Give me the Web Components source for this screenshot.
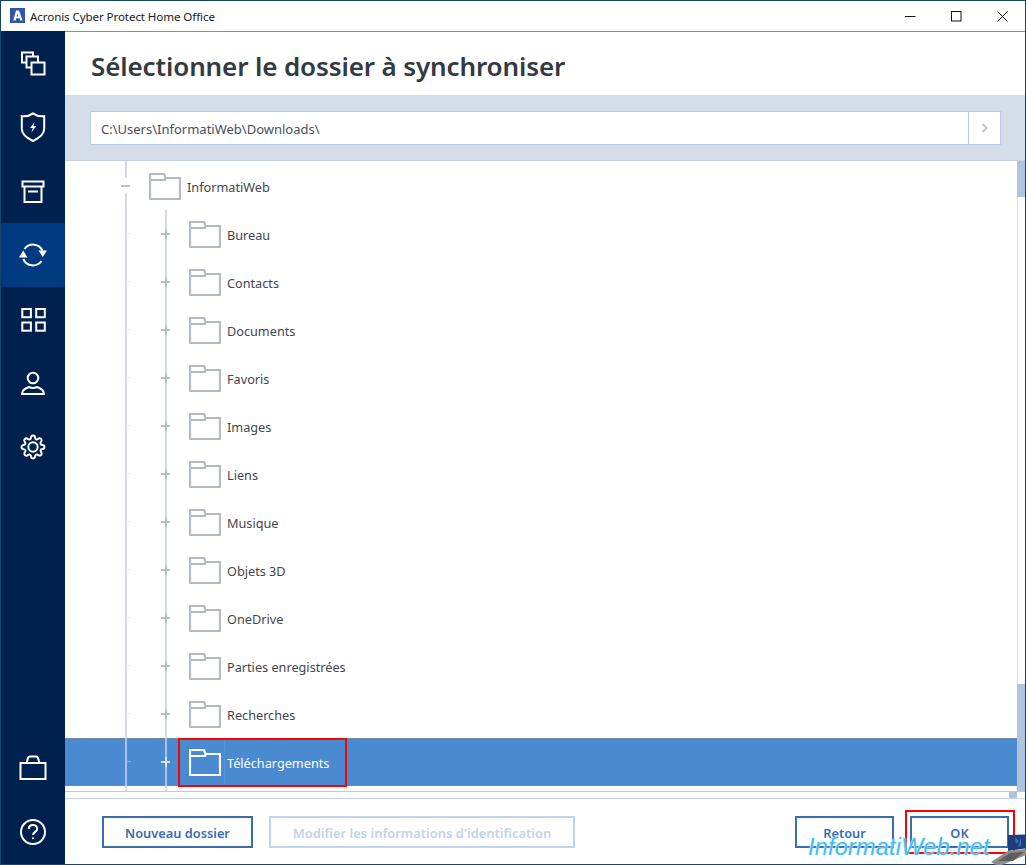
<!DOCTYPE html>
<html lang="fr">
<head>
<meta charset="utf-8">
<title>Acronis Cyber Protect Home Office</title>
<style>
  html, body { margin: 0; padding: 0; background: #fff; }
  body { font-family: "Noto Sans", "Open Sans", sans-serif; }
</style>
</head>
<body>
<app-window>
  <title-bar slot="title">Acronis Cyber Protect Home Office</title-bar>
  <side-nav slot="nav"></side-nav>
  <page-header slot="main">Sélectionner le dossier à synchroniser</page-header>
  <path-bar slot="main" value="C:\Users\InformatiWeb\Downloads\"></path-bar>
  <folder-tree slot="main">
    <tree-row level="0">InformatiWeb</tree-row>
    <tree-row>Bureau</tree-row>
    <tree-row>Contacts</tree-row>
    <tree-row>Documents</tree-row>
    <tree-row>Favoris</tree-row>
    <tree-row>Images</tree-row>
    <tree-row>Liens</tree-row>
    <tree-row>Musique</tree-row>
    <tree-row>Objets 3D</tree-row>
    <tree-row>OneDrive</tree-row>
    <tree-row>Parties enregistrées</tree-row>
    <tree-row>Recherches</tree-row>
    <tree-row selected>Téléchargements</tree-row>
  </folder-tree>
  <footer-bar slot="main">
    <action-button style="width:151px">Nouveau dossier</action-button>
    <action-button disabled style="width:306px;font-size:12.950px">Modifier les informations d'identification</action-button>
    <action-button slot="end" style="width:99px">Retour</action-button>
    <action-button slot="end" style="width:99px">OK</action-button>
  </footer-bar>
</app-window>
<red-mark style="left:178px;top:738px;width:169px;height:49px"></red-mark>
<red-mark style="left:905px;top:810px;width:110px;height:44px"></red-mark>
<site-mark></site-mark>

<script>
const GEAR = 'M19.4 15a1.65 1.65 0 0 0 .33 1.82l.06.06a2 2 0 0 1 0 2.83 2 2 0 0 1-2.83 0l-.06-.06a1.65 1.65 0 0 0-1.82-.33 1.65 1.65 0 0 0-1 1.51V21a2 2 0 0 1-2 2 2 2 0 0 1-2-2v-.09A1.65 1.65 0 0 0 9 19.4a1.65 1.65 0 0 0-1.82.33l-.06.06a2 2 0 0 1-2.83 0 2 2 0 0 1 0-2.83l.06-.06a1.65 1.65 0 0 0 .33-1.82 1.65 1.65 0 0 0-1.51-1H3a2 2 0 0 1-2-2 2 2 0 0 1 2-2h.09A1.65 1.65 0 0 0 4.6 9a1.65 1.65 0 0 0-.33-1.82l-.06-.06a2 2 0 0 1 0-2.83 2 2 0 0 1 2.83 0l.06.06a1.65 1.65 0 0 0 1.82.33H9a1.65 1.65 0 0 0 1-1.51V3a2 2 0 0 1 2-2 2 2 0 0 1 2 2v.09a1.65 1.65 0 0 0 1 1.51 1.65 1.65 0 0 0 1.82-.33l.06-.06a2 2 0 0 1 2.83 0 2 2 0 0 1 0 2.83l-.06.06a1.65 1.65 0 0 0-.33 1.82V9a1.65 1.65 0 0 0 1.51 1H21a2 2 0 0 1 2 2 2 2 0 0 1-2 2h-.09a1.65 1.65 0 0 0-1.51 1z';

// all nav icons are drawn in a 32x32 box, white stroke
const ICONS = {
  copies: '<path d="M9 15.500H5V5.500h11v4"/><path d="M14 20.500H9.500V9.500H21v6"/><rect x="14.500" y="15.500" width="13" height="12"/>',
  shield: '<path d="M4.800 5.200C8.500 5.600 13 4.600 16 2.400c3 2.200 7.500 3.200 11.200 2.800V18c0 5.500-5.700 9.300-11.200 12C10.500 27.300 4.800 23.500 4.800 18z"/><path d="M17.600 11l-4.600 6h2.800l-1.400 4.500 4.800-6.200h-2.800z" fill="#fff" stroke="none"/>',
  archive: '<rect x="5.500" y="6.500" width="21" height="5"/><path d="M7.500 11.500v15.500h17V11.500"/><path d="M11 16.500h10"/>',
  sync: '<path d="M7.500 10A10.500 10.500 0 0 1 25.700 12"/><path d="M24.500 22A10.500 10.500 0 0 1 6.300 20"/><path d="M21.500 11.500h8.500l-4.250 6.500z" fill="#fff" stroke="none"/><path d="M2 18.500h8.500l-4.250-7z" fill="#fff" stroke="none"/>',
  grid: '<rect x="5.300" y="6" width="8.600" height="8.200"/><rect x="19.200" y="6" width="8.600" height="8.200"/><rect x="5.300" y="19.500" width="8.600" height="8.200"/><rect x="19.200" y="19.500" width="8.600" height="8.200"/>',
  account: '<circle cx="16" cy="11" r="5.300"/><path d="M5 27c0-3.500 4-6 7-7 2.500 1.300 5.500 1.300 8 0 3 1 7 3.500 7 7z"/>',
  bag: '<rect x="3.500" y="11" width="25" height="16"/><path d="M9.500 11l1.500-5c.3-1 1-1.500 2-1.500h6c1 0 1.700.5 2 1.500l1.500 5"/>',
  help: '<circle cx="16" cy="16" r="12"/><path d="M11.800 13c0-2.500 1.900-4 4.200-4s4.200 1.500 4.200 3.700c0 3.300-4.200 3-4.200 6.300"/><circle cx="16" cy="22.300" r="1" fill="#fff" stroke="none"/>'
};

class AppWindow extends HTMLElement {
  constructor() {
    super();
    this.attachShadow({ mode: 'open' });
    this.shadowRoot.innerHTML = `
      <style>
        :host {
          display: grid; box-sizing: border-box; width: 1026px; height: 865px;
          grid-template-columns: 64px 1fr; grid-template-rows: 30px 1fr;
          border: 1px solid #17456a; background: #fff;
        }
        .top { grid-column: 1 / 3; display: flex; }
        .main { display: flex; flex-direction: column; min-width: 0; min-height: 0; }
      </style>
      <div class="top"><slot name="title"></slot></div>
      <slot name="nav"></slot>
      <div class="main"><slot name="main"></slot></div>
    `;
  }
}

class TitleBar extends HTMLElement {
  constructor() {
    super();
    this.attachShadow({ mode: 'open' });
    this.shadowRoot.innerHTML = `
      <style>
        :host {
          display: flex; flex: 1; align-items: center; box-sizing: border-box; height: 30px;
          background: #fff;
          font: 11.600px "Noto Sans", sans-serif; letter-spacing: -.1px; color: #1a1a1a;
        }
        .logo { margin: -1px 5px 0 9px; width: 15px; height: 15px; flex: none; }
        .text { flex: 1; white-space: nowrap; }
        .ctl { width: 46px; height: 30px; display: flex; align-items: center; justify-content: center; }
        .ctl.min { width: 45px; }
        svg { display: block; }
      </style>
      <svg class="logo" viewBox="0 0 15 15">
        <rect width="15" height="15" fill="#2f56ab"/>
        <path d="M6 2.500h3l3.600 10h-2.300l-.7-2.200H6.300l-.7 2.200H3.300zM7.500 5L6.800 8.400h1.500z" fill="#fff" fill-rule="evenodd"/>
      </svg>
      <span class="text"><slot></slot></span>
      <span class="ctl min"><svg width="11" height="11"><path d="M0 5.500h10.500" stroke="#111" stroke-width="1"/></svg></span>
      <span class="ctl"><svg width="11" height="11"><rect x=".5" y=".5" width="9.500" height="9.500" fill="none" stroke="#111"/></svg></span>
      <span class="ctl"><svg width="11" height="11"><path d="M.5.500l10 10M10.500.500l-10 10" stroke="#111" fill="none"/></svg></span>
    `;
  }
}

class NavItem extends HTMLElement {
  constructor() {
    super();
    this.attachShadow({ mode: 'open' });
  }
  connectedCallback() {
    const name = this.getAttribute('icon');
    const body = name === 'gear'
      ? `<g transform="translate(3.500 3.500) scale(1.040)"><path d="${GEAR}" stroke-width="1.900"/><circle cx="12" cy="12" r="4.500" stroke-width="1.900"/></g>`
      : ICONS[name];
    this.shadowRoot.innerHTML = `
      <style>
        :host { display: flex; align-items: center; justify-content: center; height: 64px; flex: none; }
        :host([active]) { background: #003a80; }
        svg { display: block; fill: none; stroke: #fff; stroke-width: 2; }
      </style>
      <svg width="32" height="32" viewBox="0 0 32 32">${body}</svg>
    `;
  }
}

class SideNav extends HTMLElement {
  constructor() {
    super();
    this.attachShadow({ mode: 'open' });
    this.shadowRoot.innerHTML = `
      <style>
        :host { display: flex; flex-direction: column; background: #00204e; }
        .gap { flex: 1; }
      </style>
      <nav-item icon="copies"></nav-item>
      <nav-item icon="shield"></nav-item>
      <nav-item icon="archive"></nav-item>
      <nav-item icon="sync" active></nav-item>
      <nav-item icon="grid"></nav-item>
      <nav-item icon="account"></nav-item>
      <nav-item icon="gear"></nav-item>
      <div class="gap"></div>
      <nav-item icon="bag"></nav-item>
      <nav-item icon="help"></nav-item>
    `;
  }
}

class PageHeader extends HTMLElement {
  constructor() {
    super();
    this.attachShadow({ mode: 'open' });
    this.shadowRoot.innerHTML = `
      <style>
        :host {
          display: flex; align-items: center; flex: none; box-sizing: border-box; height: 64px;
          padding: 4px 0 0 26px; border-top: 1px solid #8e8e8e;
          font: 600 26px "Noto Sans", sans-serif; letter-spacing: -.12px; color: #333a42; white-space: nowrap;
        }
      </style>
      <slot></slot>
    `;
  }
}

class PathBar extends HTMLElement {
  constructor() {
    super();
    this.attachShadow({ mode: 'open' });
  }
  connectedCallback() {
    this.shadowRoot.innerHTML = `
      <style>
        :host {
          display: flex; flex: none; box-sizing: border-box; height: 66px; padding: 16px 24px 16px 25px;
          background: #d5dde9; border-bottom: 1px solid #c6d1e0;
        }
        .box {
          flex: 1; display: flex; box-sizing: border-box; height: 34px;
          background: #fff; border: 1px solid #b9c9e0;
        }
        .val {
          flex: 1; display: flex; align-items: center; padding: 1px 0 0 10px;
          font: 13px "Noto Sans", sans-serif; color: #4a505a;
        }
        .go {
          width: 31px; display: flex; align-items: center; justify-content: center;
          border-left: 1px solid #b9c9e0;
        }
      </style>
      <div class="box">
        <div class="val">${this.getAttribute('value')}</div>
        <div class="go">
          <svg width="8" height="10"><path d="M1.500 1l4 4-4 4" fill="none" stroke="#bcc9da" stroke-width="2.200"/></svg>
        </div>
      </div>
    `;
  }
}

class FolderTree extends HTMLElement {
  constructor() {
    super();
    this.attachShadow({ mode: 'open' });
    this.shadowRoot.innerHTML = `
      <style>
        :host { display: flex; flex-direction: column; flex: 1; min-height: 0; }
        .body { flex: 1; display: flex; min-height: 0; }
        .rows { flex: 1; display: flex; flex-direction: column; min-width: 0; }
        .cap { flex: none; display: flex; padding-left: 41px; }
        .cap i { width: 40px; background: linear-gradient(#d5dbe3, #d5dbe3) 19px 0 / 2px 100% no-repeat; }
        .v { flex: none; width: 8px; display: flex; flex-direction: column; background: #fff; }
        .v b { display: block; background: #b0c4de; }
        .v .t { height: 36px; }
        .v .s { flex: 1; background: #fff; box-shadow: inset 1px 0 #d5dde9; }
        .v .e { height: 107px; }
        .h { flex: none; height: 8px; display: flex; box-sizing: border-box; border-top: 1px solid #b9c9e0; border-bottom: 1px solid #c9d5e6; }
        .h .track { flex: 1; }
        .h .corner { width: 8px; background: #b0c4de; }
        .h .pad { width: 8px; background: #fff; }
      </style>
      <div class="body">
        <div class="rows">
          <div class="cap" style="height:1px"><i></i></div>
          <slot></slot>
          <div class="cap" style="height:5px"><i></i><i></i></div>
          <div style="flex:1"></div>
        </div>
        <div class="v"><b class="t"></b><b class="s"></b><b class="e"></b></div>
      </div>
      <div class="h"><div class="track"></div><div class="corner"></div><div class="pad"></div></div>
    `;
  }
}

class TreeRow extends HTMLElement {
  constructor() {
    super();
    this.attachShadow({ mode: 'open' });
  }
  connectedCallback() {
    const top = this.getAttribute('level') === '0';
    const cols = top
      ? '<span class="g minus"></span>'
      : '<span class="g tick"></span><span class="g plus"></span>';
    this.shadowRoot.innerHTML = `
      <style>
        :host {
          --line: #d5dbe3; --mark: #b9c0c8; --tick: #e4e7eb; --folder: #b4bbc4;
          display: flex; flex: none; box-sizing: border-box; height: 48px; padding-left: 41px;
          font: 12.700px "Noto Sans", sans-serif; color: #3f4650;
        }
        :host([selected]) {
          --line: #a9c3e6; --mark: #d5e2f3; --tick: #8fb2e0; --folder: #fff;
          background: #4a8ad1; color: #fff;
          box-shadow: inset 0 1px #6f88a8, inset 0 -1px #6f88a8;
        }
        .g {
          flex: none; width: 40px;
          background: linear-gradient(var(--line), var(--line)) 19px 0 / 2px 100% no-repeat;
        }
        .tick {
          background:
            linear-gradient(var(--tick), var(--tick)) 20px 23px / 5px 1px no-repeat,
            linear-gradient(var(--line), var(--line)) 19px 0 / 2px 100% no-repeat;
        }
        .plus {
          background:
            linear-gradient(var(--mark), var(--mark)) 15px 23px / 9px 2px no-repeat,
            linear-gradient(var(--mark), var(--mark)) 19px 19px / 2px 10px no-repeat,
            linear-gradient(var(--line), var(--line)) 19px 0 / 2px 100% no-repeat;
        }
        .minus {
          background:
            linear-gradient(var(--mark), var(--mark)) 15px 23px / 9px 2px no-repeat,
            linear-gradient(var(--line), var(--line)) 19px 0 / 2px 16px no-repeat,
            linear-gradient(var(--line), var(--line)) 19px 31px / 2px 17px no-repeat;
        }
        svg { display: block; flex: none; margin-left: 3px; align-self: center; }
        .label { display: flex; align-items: center; margin-left: 3px; padding: 2px 0 0 3px; white-space: nowrap; }
        :host([selected]) .label { border-left: 1px dotted #8d8f96; padding-left: 2px; }
      </style>
      ${cols}
      <svg width="32" height="27" viewBox="0 0 32 27" fill="none" stroke="var(--folder)" stroke-width="2.200">
        <path d="M1 1h14l1.500 4H31v21H1z"/><path d="M1 7h15l1-2"/>
      </svg>
      <span class="label"><slot></slot></span>
    `;
  }
}

class FooterBar extends HTMLElement {
  constructor() {
    super();
    this.attachShadow({ mode: 'open' });
    this.shadowRoot.innerHTML = `
      <style>
        :host {
          display: flex; align-items: flex-start; flex: none; box-sizing: border-box; height: 65px;
          padding: 17px 16px 0 37px; gap: 16px;
        }
        .end { margin-left: auto; display: flex; gap: 16px; }
      </style>
      <slot></slot>
      <div class="end"><slot name="end"></slot></div>
    `;
  }
}

class ActionButton extends HTMLElement {
  constructor() {
    super();
    this.attachShadow({ mode: 'open' });
    this.shadowRoot.innerHTML = `
      <style>
        :host {
          display: flex; align-items: center; justify-content: center; box-sizing: border-box;
          height: 32px; padding-top: 1px; border: 2px solid #3a6cae; background: #fff;
          font: 600 12.800px "Noto Sans", sans-serif; color: #3a6cae; white-space: nowrap;
        }
        :host([disabled]) { border-color: #bfd4ea; color: #c3d3e6; }
      </style>
      <slot></slot>
    `;
  }
}

class RedMark extends HTMLElement {
  constructor() {
    super();
    this.attachShadow({ mode: 'open' });
    this.shadowRoot.innerHTML = `
      <style>
        :host { display: block; position: absolute; box-sizing: border-box; border: 2px solid #f00; pointer-events: none; }
      </style>
    `;
  }
}

class SiteMark extends HTMLElement {
  constructor() {
    super();
    this.attachShadow({ mode: 'open' });
    this.shadowRoot.innerHTML = `
      <style>
        :host {
          display: block; position: absolute; left: 808px; top: 831px; width: 218px; height: 34px; overflow: hidden;
        }
        .t {
          display: block; font: italic 23.500px "Liberation Sans", Arial, sans-serif; line-height: 33px; color: #3fbdf4;
          letter-spacing: .2px; white-space: nowrap;
          text-shadow: 0 0 1px #fff, 0 0 2px #bfeaff;
        }
        svg { position: absolute; right: 0; top: 1px; }
      </style>
      <span class="t">InformatiWeb.net</span>
      <svg width="36" height="33" viewBox="0 0 36 33">
        <path d="M18 3l17-0.500v14L18 19z" fill="#1c3f7c"/>
        <path d="M25 5l4 4-3 3zM31 5v9l-3 1z" fill="#3d6fb5"/>
        <path d="M1 30L18 19l18-2v6L12 33H6z" fill="#8c8c8c"/>
        <path d="M8 29l12-8 14-1-11 9z" fill="#5e5e5e"/>
      </svg>
    `;
  }
}

customElements.define('app-window', AppWindow);
customElements.define('title-bar', TitleBar);
customElements.define('nav-item', NavItem);
customElements.define('side-nav', SideNav);
customElements.define('page-header', PageHeader);
customElements.define('path-bar', PathBar);
customElements.define('folder-tree', FolderTree);
customElements.define('tree-row', TreeRow);
customElements.define('footer-bar', FooterBar);
customElements.define('action-button', ActionButton);
customElements.define('red-mark', RedMark);
customElements.define('site-mark', SiteMark);
</script>
</body>
</html>
